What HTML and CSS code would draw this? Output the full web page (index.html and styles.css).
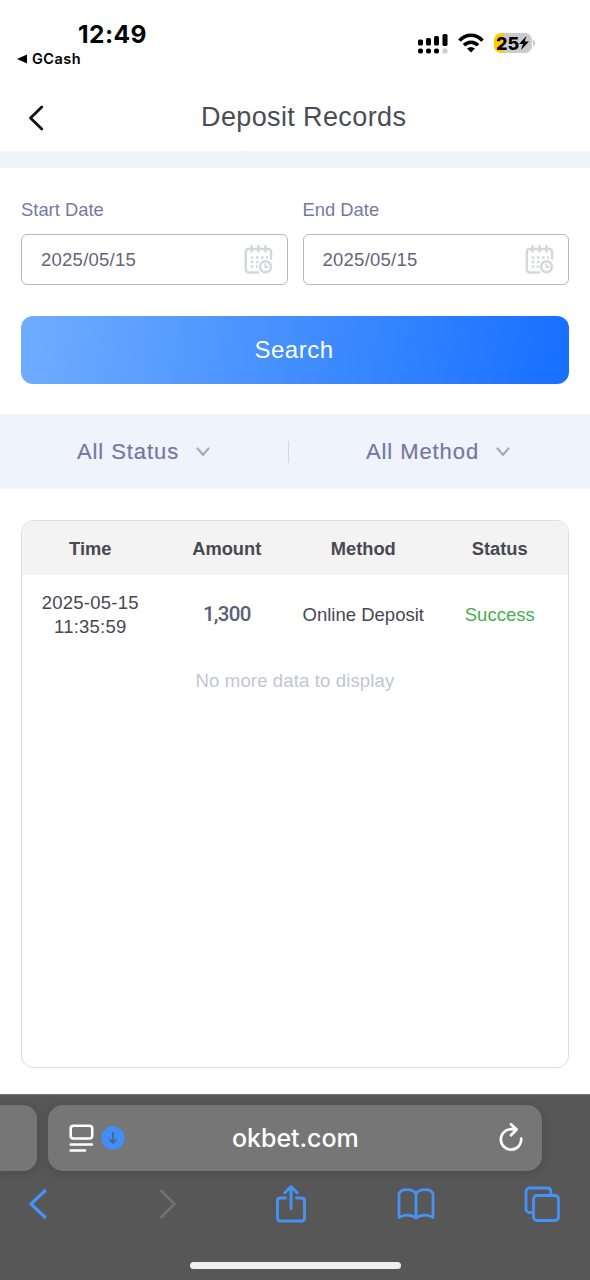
FILE: index.html
```html
<!DOCTYPE html>
<html lang="en">
<head>
<meta charset="utf-8">
<title>Deposit Records</title>
<link rel="stylesheet" href="styles.css">
</head>
<body>
<div class="screen">
  <header class="status-bar">
    <div class="status-left">
      <div class="clock">12:49</div>
      <div class="back-app"><svg width="10" height="10" viewBox="0 0 10 10"><path d="M0 5L10 .5V9.5Z" fill="#000"/></svg><span>GCash</span></div>
    </div>
    <div class="status-icons">
      <svg width="30" height="21" viewBox="0 0 30 21"><g fill="#000"><rect y="6.5" width="5" height="6" rx="1.6"/><rect x="8" y="5" width="5" height="7.5" rx="1.6"/><rect x="16" y="3" width="5" height="9.500" rx="1.600"/><rect x="24.500" y="1" width="5" height="12" rx="1.600"/><rect y="15.500" width="5" height="5" rx="2"/><rect x="8" y="15.500" width="5" height="5" rx="2"/><rect x="16" y="15.500" width="5" height="5" rx="2"/></g><rect x="24.500" y="15.500" width="5" height="5" rx="1.500" fill="#ccc"/></svg>
      <svg width="26" height="20" viewBox="0 0 26 20" fill="none" stroke="#000" stroke-width="3.500"><path d="M1.500 7.600C8 .5 18 .5 24.500 7.600M6 12.300C10 8.100 16 8.100 20 12.300"/><path d="M13 19.500L9 15.600Q13 12.400 17 15.600Z" fill="#000" stroke="none"/></svg>
      <div class="battery"><b>25</b><svg width="10" height="14" viewBox="0 0 10 14"><path d="M7.500 0L0 8H4L2 14L10 5.600H5.700Z" fill="#000"/></svg></div>
    </div>
  </header>

  <div class="title-bar">
    <svg class="title-back" width="16" height="26" viewBox="0 0 16 26" fill="none" stroke="#111" stroke-width="2.800" stroke-linecap="round" stroke-linejoin="round"><path d="M13.800 2L2.500 13L13.800 24"/></svg>
    <h1>Deposit Records</h1>
  </div>

  <section class="filters">
    <div class="dates">
      <div class="field"><label>Start Date</label><div class="date-box"><span>2025/05/15</span><svg class="calendar" width="29" height="30" viewBox="0 0 29 30"><use href="#cal"/></svg></div></div>
      <div class="field"><label>End Date</label><div class="date-box"><span>2025/05/15</span><svg class="calendar" width="29" height="30" viewBox="0 0 29 30"><use href="#cal"/></svg></div></div>
    </div>
    <button class="search">Search</button>
  </section>

  <nav class="dropdowns">
    <div class="drop"><span>All Status</span><svg width="14" height="10" viewBox="0 0 14 10"><path d="M1.500 1.500L7 7.800L12.500 1.500"/></svg></div>
    <i class="divider"></i>
    <div class="drop"><span>All Method</span><svg width="14" height="10" viewBox="0 0 14 10"><path d="M1.500 1.500L7 7.800L12.500 1.500"/></svg></div>
  </nav>

  <section class="records">
    <div class="row head"><span>Time</span><span>Amount</span><span>Method</span><span>Status</span></div>
    <div class="row entry"><span>2025-05-15<br>11:35:59</span><span class="amount">1,300</span><span>Online Deposit</span><span class="success">Success</span></div>
    <p class="empty">No more data to display</p>
  </section>

  <footer class="browser">
    <div class="tabs">
      <div class="tab-prev"></div>
      <div class="address">
        <svg width="25" height="28" viewBox="0 0 25 28" fill="none" stroke="#fff" stroke-width="2.600" stroke-linecap="round"><rect x="1.700" y="1.700" width="21.500" height="12.800" rx="2.800"/><path d="M1.700 20.500H23M1.700 26.500H16"/></svg>
        <svg class="download" width="24" height="24" viewBox="0 0 24 24"><circle cx="12" cy="12" r="11.700" fill="#428df7"/><path d="M12 6V16.500M8.300 13L12 17L15.700 13" fill="none" stroke="#44699f" stroke-width="2"/></svg>
        <span class="host">okbet.com</span>
        <svg class="reload" width="26" height="30" viewBox="0 0 26 30" fill="none" stroke="#fff" stroke-width="2.700" stroke-linecap="round" stroke-linejoin="round"><path d="M23.200 15.500A10.200 10.200 0 1 1 13 6.200H18.500M13 1.200L18.500 6.500L13 12.300"/></svg>
      </div>
    </div>
    <div class="toolbar">
      <svg width="18" height="30" viewBox="0 0 18 30" stroke-width="3.300"><path d="M15.800 2L2 15L15.800 28"/></svg>
      <svg class="disabled" width="18" height="30" viewBox="0 0 18 30" stroke-width="3"><path d="M2.500 2L15.500 15L2.500 28"/></svg>
      <svg class="share" width="32" height="38" viewBox="0 0 32 38" stroke-width="2.900"><path d="M10.500 13H5.500Q2.500 13 2.500 16V33Q2.500 36 5.500 36H26.500Q29.500 36 29.500 33V16Q29.500 13 26.500 13H21.500M16 23.500V2M9.800 7.800L16 1.600L22.200 7.800"/></svg>
      <svg class="book" width="38" height="32" viewBox="0 0 38 32" stroke-width="2.800"><path d="M19 30C15 26.500 7 26 2 29.500V6C4 .2 16 .2 19 6C22 .2 34 .2 36 6V29.500C31 26 23 26.500 19 30V6"/></svg>
      <svg class="windows" width="36" height="36" viewBox="0 0 36 36" stroke-width="2.800"><path d="M9.500 26.500H6Q2 26.500 2 22.500V6Q2 2 6 2H23Q27 2 27 6V8.500"/><rect x="9.500" y="9.500" width="25" height="25" rx="3.500"/></svg>
    </div>
    <div class="home-indicator"></div>
  </footer>
</div>
<svg class="symbols" width="0" height="0"><defs><g id="cal" fill="none" stroke="#d5d8db" stroke-width="2.500"><path d="M21.500 4H24Q27 4 27 7V13.500M14 27.500H5Q1.800 27.500 1.800 24V7Q1.800 4 5 4H8M9 4H21M7.500 1V6.500M14.500 1V6.500M21.500 1V6.500" stroke-linecap="round"/><path d="M6.800 12.500H24M6.800 17H17M6.800 21.500H14" stroke-dasharray="2.600 2.500"/><circle cx="21.500" cy="21.700" r="5.500"/><path d="M21.300 18.500V22H24.300" stroke-width="1.800"/></g></defs></svg>
</body>
</html>
```
FILE: styles.css
```css
* { box-sizing: border-box; }
body { margin: 0; background: #fff; font-family: "Liberation Sans", Arial, sans-serif; color: #464852; }
svg { display: block; flex: none; }
.symbols { position: absolute; }
.screen { width: 590px; height: 1280px; display: flex; flex-direction: column; overflow: hidden; }

.status-bar { height: 84px; display: flex; justify-content: space-between; padding: 18px 55px 0 17px; font-family: Inter, sans-serif; color: #000; }
.clock { margin: 1px 0 0 61px; font-size: 24.5px; line-height: 30px; font-weight: 700; letter-spacing: .45px; }
.back-app { display: flex; align-items: center; gap: 5px; font-size: 14.5px; line-height: 20px; font-weight: 600; letter-spacing: .45px; }
.status-icons { display: flex; align-items: center; height: 50px; gap: 10px; }
.battery { position: relative; width: 38px; height: 20px; margin-right: 3px; border-radius: 7px; background: linear-gradient(90deg, #fc0 0 10px, #cbcbcb 10px); display: flex; align-items: center; padding-left: 2px; font-size: 18px; letter-spacing: 0; }
.battery b { font-weight: 800; }
.battery::after { content: ""; position: absolute; right: -3px; top: 7px; width: 2px; height: 6px; border-radius: 0 2px 2px 0; background: #ccc; }

.title-bar { height: 84px; border-bottom: 17px solid #eff4fb; display: flex; align-items: flex-start; padding: 21px 0 0 28px; }
.title-bar h1 { margin: -4px 0 0 157px; font-size: 27px; line-height: 32px; font-weight: 400; letter-spacing: .38px; color: #4b4d56; }

.filters { height: 246px; padding: 31px 21px 0; }
.dates { display: grid; grid-template-columns: 1fr 1fr; gap: 15px; }
.field label { display: block; height: 35px; font-size: 18.4px; line-height: 22px; color: #777aa0; }
.date-box { height: 51px; border: 1px solid #b9b9bb; border-radius: 6px; padding: 0 14px 0 19px; display: flex; align-items: center; justify-content: space-between; font-size: 18.5px; letter-spacing: .25px; color: #646679; }
.calendar { margin-top: 1px; }
.search { display: block; width: 100%; height: 68px; margin-top: 31px; border: 0; border-radius: 12px; padding: 0 2px 0 0; background: linear-gradient(100deg, #70adff, #166fff); font: 24px "Liberation Sans", Arial, sans-serif; letter-spacing: .5px; color: #fff; }

.dropdowns { height: 75px; background: #eff4fc; display: flex; align-items: center; color: #7477a4; }
.drop { width: 287px; margin-right: 2px; display: flex; align-items: center; justify-content: center; gap: 17px; font-size: 22px; letter-spacing: .93px; -webkit-text-stroke: .2px #7477a4; }
.drop:last-child { width: 298px; }
.drop svg { fill: none; stroke: #a9abba; stroke-width: 2.2; stroke-linecap: round; }
.divider { width: 1px; height: 22px; margin-left: -1px; background: #d2d6e2; }

.records { height: 548px; margin: 31px 21px 0; border: 1px solid #dedee0; border-radius: 12px; overflow: hidden; }
.row { display: grid; grid-template-columns: repeat(4, 1fr); align-items: center; text-align: center; font-size: 18px; line-height: 24px; }
.head { height: 54px; padding-top: 2px; background: #f3f3f3; font-weight: 700; font-size: 18.3px; }
.entry { height: 80px; font-size: 18.5px; }
.entry span:first-child { letter-spacing: .22px; }
.amount { font-family: Roboto, sans-serif; font-size: 20.5px; font-weight: 500; color: #5b5e7b; letter-spacing: -.7px; margin-top: -2px; }
.success { color: #45b14b; }
.empty { margin: 14px 0 0; text-align: center; font-size: 18.5px; line-height: 24px; letter-spacing: .15px; color: #c2c5d5; }

.browser { height: 186px; margin-top: auto; background: #575757; border-top: 1px solid #747474; padding-top: 10px; }
.tabs { display: flex; gap: 11px; height: 66px; }
.tab-prev { width: 37px; background: #767676; border-radius: 0 14px 14px 0; box-shadow: 0 2px 12px rgba(0,0,0,.14); }
.address { width: 494px; display: flex; align-items: center; padding: 0 18px 0 21px; border-radius: 15px; background: #767676; box-shadow: 0 2px 12px rgba(0,0,0,.14); color: #fff; }
.download { margin-left: 7px; }
.host { margin-left: 107px; font: 500 25px Inter, sans-serif; letter-spacing: -.05px; }
.reload { margin-left: auto; }
.toolbar { height: 66px; display: flex; align-items: center; padding-left: 29px; }
.toolbar svg { fill: none; stroke: #4691f6; stroke-linecap: round; stroke-linejoin: round; }
.toolbar .disabled { margin-left: 112px; stroke: #707070; }
.share { margin-left: 98px; }
.book { margin-left: 90px; }
.windows { margin-left: 89px; }
.home-indicator { width: 211px; height: 7px; margin: 25px auto 0; border-radius: 4px; background: #efefef; }
```
